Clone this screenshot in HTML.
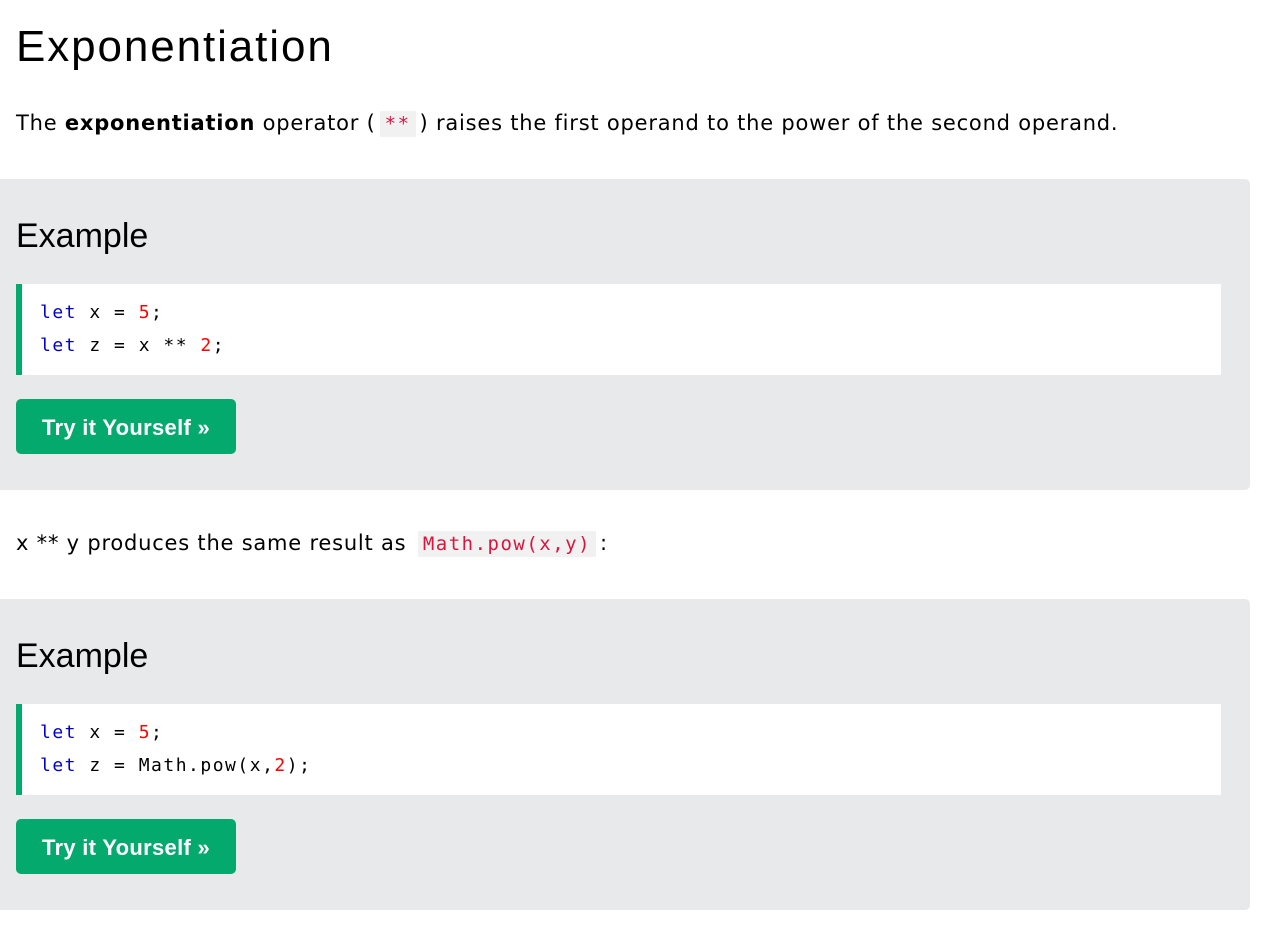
<!DOCTYPE html>
<html><head><style>
body{margin:0;background:#fff;font-family:"DejaVu Sans","Liberation Sans",sans-serif;color:#000;width:1264px;height:944px;overflow:hidden;position:relative}
h1{position:absolute;left:16px;top:22px;margin:0;font-weight:normal;font-size:44px;font-family:"Liberation Sans",sans-serif;letter-spacing:1.9px}
.p{position:absolute;left:16px;font-size:21px;white-space:nowrap;letter-spacing:0.78px}
.ic{font-family:"DejaVu Sans Mono","Liberation Mono",monospace;color:#DC143C;background:#f1f1f1;padding:2px 5px;margin:0 4px;font-size:19px;letter-spacing:1.5px}
.box{position:absolute;left:0;width:1250px;height:311px;background:#E7E9EB;border-radius:0 5px 5px 0}
.box h2{position:absolute;left:16px;top:38px;margin:0;font-weight:normal;font-size:34px;font-family:"Liberation Sans",sans-serif}
.code{position:absolute;left:16px;top:105px;width:1205px;height:91px;background:#fff;border-left:6px solid #04AA6D;font-family:"DejaVu Sans Mono","Liberation Mono",monospace;font-size:18px;letter-spacing:1.5px;line-height:33px;padding-top:12px;box-sizing:border-box;padding-left:18px;white-space:pre}
.k{color:mediumblue}.n{color:red}
.btn{position:absolute;left:16px;top:220px;width:220px;height:55px;background:#04AA6D;border-radius:5px;color:#fff;font-weight:bold;font-size:22px;font-family:"Liberation Sans",sans-serif;line-height:57px;text-align:center;letter-spacing:0.3px}
</style></head><body>
<h1>Exponentiation</h1>
<div class="p" style="top:111px">The <b>exponentiation</b> operator (<span class="ic">**</span>) raises the first operand to the power of the second operand.</div>
<div class="box" style="top:179px">
<h2>Example</h2>
<div class="code"><span class="k">let</span> x = <span class="n">5</span>;
<span class="k">let</span> z = x ** <span class="n">2</span>;</div>
<div class="btn">Try it Yourself »</div>
</div>
<div class="p" style="top:531px">x ** y produces the same result as <span class="ic">Math.pow(x,y)</span>:</div>
<div class="box" style="top:599px">
<h2>Example</h2>
<div class="code"><span class="k">let</span> x = <span class="n">5</span>;
<span class="k">let</span> z = Math.pow(x,<span class="n">2</span>);</div>
<div class="btn">Try it Yourself »</div>
</div>
</body></html>
